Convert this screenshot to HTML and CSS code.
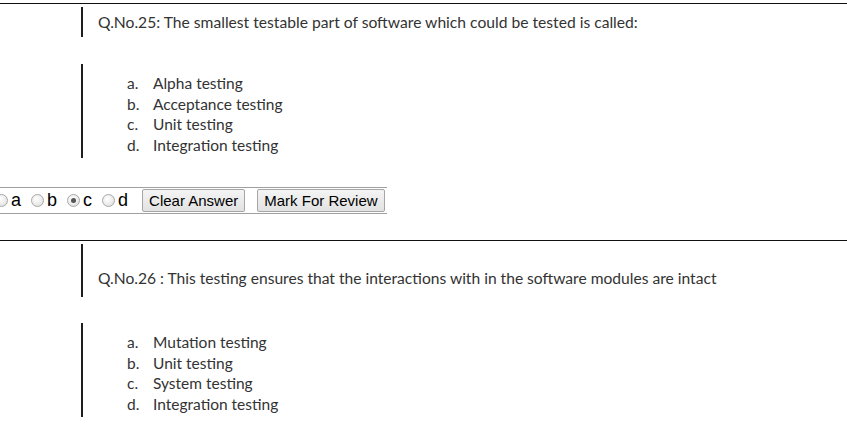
FILE: index.html
```html
<!DOCTYPE html>
<html>
<head>
<meta charset="utf-8">
<link rel="stylesheet" href="styles.css">
</head>
<body>
<div class="page">
  <div class="rule"></div>
  <div class="qimg">
    <div class="qbar qhead q25">Q.No.25: The smallest testable part of software which could be tested is called:</div>
  </div>
  <div class="qimg opts-gap">
    <ol class="qbar opts">
      <li><span class="mk">a.</span>Alpha testing</li>
      <li><span class="mk">b.</span>Acceptance testing</li>
      <li><span class="mk">c.</span>Unit testing</li>
      <li><span class="mk">d.</span>Integration testing</li>
    </ol>
  </div>
  <div class="answer">
    <span class="radio"></span><span class="lbl">a</span>
    <span class="radio"></span><span class="lbl">b</span>
    <span class="radio checked"></span><span class="lbl">c</span>
    <span class="radio"></span><span class="lbl">d</span>
    <button class="btn btn-clear">Clear Answer</button>
    <button class="btn btn-mark">Mark For Review</button>
  </div>
  <div class="rule rule2"></div>
  <div class="qimg">
    <div class="qbar qhead q26">Q.No.26 : This testing ensures that the interactions with in the software modules are intact</div>
  </div>
  <div class="qimg opts-gap2">
    <ol class="qbar opts">
      <li><span class="mk">a.</span>Mutation testing</li>
      <li><span class="mk">b.</span>Unit testing</li>
      <li><span class="mk">c.</span>System testing</li>
      <li><span class="mk">d.</span>Integration testing</li>
    </ol>
  </div>
</div>
</body>
</html>
```

FILE: styles.css
```css
html, body {
  margin: 0;
  padding: 0;
  background: #ffffff;
}

.page {
  width: 847px;
  overflow: hidden;
  font-family: Lato, "Open Sans", sans-serif;
  color: #333333;
}

.rule {
  margin-top: 3px;
  height: 1px;
  background: #111111;
}

.rule2 {
  margin-top: 26px;
}

.qimg {
  padding-left: 81px;
  margin-top: 3px;
}

.opts-gap {
  margin-top: 27px;
}

.opts-gap2 {
  margin-top: 26px;
}

.qbar {
  border-left: 2px solid #1e1e1e;
  padding-left: 15px;
}

.qhead {
  font-size: 15.65px;
  white-space: nowrap;
}

.q25 {
  height: 30px;
  line-height: 30px;
}

.q26 {
  height: 53px;
  line-height: 20px;
  padding-top: 24px;
  box-sizing: border-box;
  font-size: 15.6px;
}

.opts {
  list-style: none;
  margin: 0;
  padding: 9px 0 3px 44px;
  font-size: 15.5px;
  line-height: 20.5px;
}

.opts li {
  display: flex;
  white-space: nowrap;
}

.mk {
  display: inline-block;
  width: 26px;
}

.answer {
  margin-top: 29px;
  margin-left: -5px;
  width: 392px;
  height: 25px;
  border-top: 1px solid #a0a0a0;
  border-bottom: 1px solid #a0a0a0;
  display: flex;
  align-items: center;
  font-family: "Liberation Sans", Arial, sans-serif;
  font-size: 18px;
  color: #000000;
}

.radio {
  width: 11px;
  height: 11px;
  border-radius: 50%;
  border: 1px solid #a8a8a8;
  background: radial-gradient(circle at 40% 35%, #ffffff 0%, #eaeaea 60%, #d6d6d6 100%);
  margin-left: 5px;
  margin-right: 3px;
  position: relative;
  flex: none;
}

.radio:first-child {
  margin-left: 0;
}

.radio.checked::after {
  content: "";
  position: absolute;
  left: 3px;
  top: 3px;
  width: 5px;
  height: 5px;
  border-radius: 50%;
  background: #555555;
}

.lbl {
  margin-right: 5px;
  line-height: 25px;
}

.btn {
  font-family: "Liberation Sans", Arial, sans-serif;
  font-size: 15px;
  color: #000000;
  height: 23px;
  padding: 0 6px;
  border: 1px solid #a6a6a6;
  border-radius: 2px;
  background: linear-gradient(#f4f4f4, #e2e2e2);
  line-height: 21px;
  white-space: nowrap;
  flex: none;
}

.btn-clear {
  margin-left: 9px;
}

.btn-mark {
  margin-left: 12px;
}
```
